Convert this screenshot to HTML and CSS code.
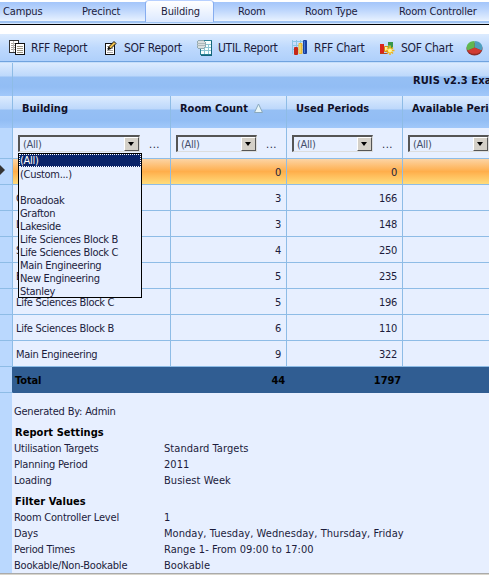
FILE: index.html
```
<!DOCTYPE html>
<html lang="en">
<head>
	<meta charset="UTF-8">
	<title>RUIS v2.3</title>
	<link rel="stylesheet" href="styles.css">
</head>
<body>
	<!-- tabs -->
	<div class="tabs">
		<div class="tab t_campus">Campus</div>
		<div class="tab t_precinct">Precinct</div>
		<div class="tab t_building active">Building</div>
		<div class="tab t_room">Room</div>
		<div class="tab t_type">Room Type</div>
		<div class="tab t_controller">Room Controller</div>
	</div>
	<!-- toolbar -->
	<div class="toolbar">
		<div class="tool rff">
			<svg width="18" height="17" viewBox="0 0 18 17" shape-rendering="crispEdges">
				<path d="M1.500 1.500h9v12h-9z" fill="#fff" stroke="#333"/>
				<path d="M3 4h6M3 6h6M3 8h6M3 10h6" stroke="#aaa49a"/>
				<path d="M5.500 2v11" stroke="#bbb"/>
				<path d="M7.500 4.500h9v11h-9z" fill="#fff" stroke="#111"/>
				<path d="M9 7.500h6M9 9.500h6M9 11.500h6M9 13.500h6" stroke="#9a9480"/>
			</svg>
			<span>RFF Report</span>
		</div>
		<div class="tool sof">
			<svg width="14" height="16" viewBox="0 0 14 16">
				<path d="M1.500 3.500h9v11h-9z" fill="#fff" stroke="#111" shape-rendering="crispEdges"/>
				<path d="M3 6.500h6M3 8.500h6M3 10.500h6M3 12.500h6" stroke="#aaa"/>
				<path d="M4 9.500l1-3 5-5 2 2-5 5z" fill="#f2c14a" stroke="#111"/>
				<path d="M4 9.500l1-3 1.500 2z" fill="#111"/>
			</svg>
			<span>SOF Report</span>
		</div>
		<div class="tool util">
			<svg width="17" height="17" viewBox="0 0 17 17" shape-rendering="crispEdges">
				<path d="M4.500 1.500h11v14h-11z" fill="#f6ffff" stroke="#267f93"/>
				<path d="M5 5.500h10M5 8.500h10M5 11.500h10M8.500 5v10M12.500 5v10" stroke="#8cc5d3"/>
				<path d="M15.500 2v14h-11" fill="none" stroke="#146579"/>
				<path d="M1 3c0-2 8-2 8 0v5c0 2-8 2-8 0z" fill="#d8dedf" stroke="#91a9b0"/>
				<path d="M1 4h8M1 6h8" stroke="#adb9bb"/>
			</svg>
			<span>UTIL Report</span>
		</div>
		<div class="tool rff_chart">
			<svg width="17" height="17" viewBox="0 0 17 17">
				<path d="M1 2.500h11M1 6.500h11M1 10.500h11M1.500 1v14M5.500 1v14M9.500 1v14" stroke="#8bc5e5"/>
				<rect x="3" y="8" width="4" height="8" rx="1" fill="#c52718"/>
				<rect x="7.500" y="4" width="4" height="11" rx="1" fill="#e9b936"/>
				<path d="M9 5v9" stroke="#fff08d"/>
				<rect x="12" y="1" width="4" height="14" rx="1" fill="#173f9f"/>
				<path d="M13.500 2v12" stroke="#4276d6"/>
			</svg>
			<span>RFF Chart</span>
		</div>
		<div class="tool sof_chart">
			<svg width="17" height="16" viewBox="0 0 17 16">
				<path d="M1 4h4v10H1z" fill="#d9251c"/>
				<path d="M5.500 6.500h4v5h-4z" fill="#fff2a8" stroke="#d28b17"/>
				<path d="M9 2h5v7H9z" fill="#38964a"/>
				<path d="M9 5h3v4H9z" fill="#70b956"/>
				<path d="M1 13.500h8" stroke="#b9431c"/>
				<path d="M11 6v9M6.500 10.500h9M8 7.500l6 6M14 7.500l-6 6" stroke="#efb51c" stroke-width="1.500"/>
				<circle cx="11" cy="10.500" r="2" fill="#fff69b"/>
			</svg>
			<span>SOF Chart</span>
		</div>
		<div class="tool pie">
			<svg width="17" height="16" viewBox="0 0 17 16">
				<ellipse cx="8.500" cy="9" rx="8" ry="6.500" fill="#8b2b27"/>
				<path d="M8.500 7.500V1a8 6.500 0 0 1 7 9.500z" fill="#4f9fbe"/>
				<path d="M8.500 7.500l7 3a8 6.500 0 0 1-14 0z" fill="#d13a31"/>
				<path d="M8.500 7.500V1a8 6.500 0 0 0-7 9.500z" fill="#60b74f"/>
			</svg>
		</div>
	</div>
	<!-- grid -->
	<div class="grid">
		<div class="row title"><div class="ind"></div><div class="caption">RUIS v2.3 Example</div></div>
		<div class="row head">
			<div class="ind"></div>
			<div><span>Building</span></div>
			<div><span>Room Count</span><svg class="sort" width="9" height="10" viewBox="0 0 9 10"><path d="M4.500 1L8.500 9.500h-8z" fill="#e8f6f8" stroke="#8aa9bd"/></svg></div>
			<div><span>Used Periods</span></div>
			<div><span>Available Periods</span></div>
		</div>
		<div class="row filter">
			<div class="ind"></div>
			<div>
				<div class="select wide"><span>(All)</span><i class="arrow"></i></div><b class="dots">...</b>
				<div class="list">
					<div class="sel"><span>(All)</span></div>
					<div><span>(Custom...)</span></div>
					<div></div>
					<div><span>Broadoak</span></div>
					<div><span>Grafton</span></div>
					<div><span>Lakeside</span></div>
					<div><span>Life Sciences Block B</span></div>
					<div><span>Life Sciences Block C</span></div>
					<div><span>Main Engineering</span></div>
					<div><span>New Engineering</span></div>
					<div><span>Stanley</span></div>
				</div>
			</div>
			<div><div class="select"><span>(All)</span><i class="arrow"></i></div><b class="dots">...</b></div>
			<div><div class="select"><span>(All)</span><i class="arrow"></i></div><b class="dots">...</b></div>
			<div><div class="select"><span>(All)</span><i class="arrow"></i></div></div>
		</div>
		<div class="row data current"><div class="ind"><svg width="5" height="12" viewBox="0 0 5 12"><path d="M0 1l5 5-5 5z" fill="#333"/></svg></div><div></div><div>0</div><div>0</div><div></div></div>
		<div class="row data"><div class="ind"></div><div>Grafton</div><div>3</div><div>166</div><div></div></div>
		<div class="row data"><div class="ind"></div><div>Lakeside</div><div>3</div><div>148</div><div></div></div>
		<div class="row data"><div class="ind"></div><div>Stanley</div><div>4</div><div>250</div><div></div></div>
		<div class="row data"><div class="ind"></div><div>Broadoak</div><div>5</div><div>235</div><div></div></div>
		<div class="row data"><div class="ind"></div><div>Life Sciences Block C</div><div>5</div><div>196</div><div></div></div>
		<div class="row data"><div class="ind"></div><div>Life Sciences Block B</div><div>6</div><div>110</div><div></div></div>
		<div class="row data"><div class="ind"></div><div>Main Engineering</div><div>9</div><div>322</div><div></div></div>
		<div class="row total"><div class="ind"></div><div>Total</div><div>44</div><div>1797</div><div></div></div>
	</div>
	<!-- report info -->
	<div class="info">
		<p class="by">Generated By: Admin</p>
		<h4>Report Settings</h4>
		<dl>
			<dt>Utilisation Targets</dt><dd>Standard Targets</dd>
			<dt>Planning Period</dt><dd>2011</dd>
			<dt>Loading</dt><dd>Busiest Week</dd>
		</dl>
		<h4>Filter Values</h4>
		<dl>
			<dt>Room Controller Level</dt><dd>1</dd>
			<dt>Days</dt><dd>Monday, Tuesday, Wednesday, Thursday, Friday</dd>
			<dt>Period Times</dt><dd>Range 1- From 09:00 to 17:00</dd>
			<dt>Bookable/Non-Bookable</dt><dd>Bookable</dd>
		</dl>
	</div>
	<div class="bottom"></div>
</body>
</html>
```
FILE: styles.css
```
*{
	box-sizing:border-box;
}
body{
	margin:0;
	width:489px;
	height:575px;
	overflow:hidden;
	background:#fff;
	color:#1c1c3c;
	font:11px/13px "DejaVu Sans Condensed","DejaVu Sans",sans-serif;
	font-stretch:condensed;
	letter-spacing:-0.3px;
	white-space:nowrap;
}

/* tabs */
.tabs{
	display:flex;
	height:25px;
	padding-top:2px;
	border-bottom:1px solid #000;
	background:linear-gradient(#fff 2px,#a3c5fa 2px,#b8d3fc 9px,#e4efff 20px,#f4f9ff 21px,#9fc3f2 21px,#9fc3f2 23px,#d5e6fc 23px);
	letter-spacing:-0.15px;
}
.tab{
	flex:none;
	padding-top:3px;
}
.t_campus{
	width:82px;
	padding-left:3px;
}
.t_precinct{
	width:63px;
}
.t_building{
	width:69px;
	padding-left:15px;
}
.t_room{
	width:91px;
	padding-left:24px;
}
.t_type{
	width:94px;
}
.active{
	height:22px;
	margin-top:-2px;
	padding-top:4px;
	border:1px solid #86adf0;
	border-top-color:#b7d0ff;
	border-bottom:0;
	border-radius:4px 4px 0 0;
	background:linear-gradient(#fff,#dce9ff);
}

/* toolbar */
.toolbar{
	display:flex;
	height:28px;
	margin-top:9px;
	padding-left:8px;
	border-bottom:1px solid #70a3df;
	background:linear-gradient(#dcebfe,#bed9fd 50%,#afd0fb);
	font-size:12px;
}
.tool{
	display:flex;
	align-items:center;
	gap:5px;
	flex:none;
}
.tool span{
	padding-top:2px;
}
.rff{
	width:96px;
}
.sof{
	gap:6px;
	width:92px;
}
.util{
	width:95px;
}
.rff_chart{
	gap:6px;
	width:88px;
}
.sof_chart{
	width:87px;
}

/* grid */
.row{
	display:grid;
	grid-template-columns:13px 158px 116px 116px 86px;
}
.row>div{
	border-right:1px solid #8ebce6;
}
.row>div:last-child{
	border-right:0;
}
.row .ind{
	background:#bad8fe;
}
.title{
	grid-template-columns:13px 476px;
	height:34px;
	border-top:1px solid #c5defa;
}
.title>div,.title>.ind,.head>div,.head>.ind{
	background:linear-gradient(#dcebfe,#bdd8fb 13px,#95bff4 14px,#92bdf4 24px,#a1c8fa);
}
.caption{
	padding:11px 0 0 400px;
	font-weight:bold;
	letter-spacing:0.1px;
	color:#101028;
	overflow:hidden;
}
.head{
	height:32px;
	font-weight:bold;
	letter-spacing:0;
	color:#101028;
}
.head>div{
	padding:6px 0 0 9px;
	overflow:hidden;
}
.sort{
	margin-left:6px;
	vertical-align:-1px;
}
.filter{
	height:31px;
	border-bottom:1px solid #8ebce6;
	background:#e7efff;
}
.filter>div{
	display:flex;
	position:relative;
	padding:7px 0 0 5px;
}
.select{
	display:flex;
	justify-content:space-between;
	width:81px;
	height:17px;
	border:1px solid #888;
	border-width:2px 1px 1px 2px;
	border-color:#555 #ddd #ddd #555;
	padding-left:3px;
	line-height:15px;
	color:#46506b;
}
.wide{
	width:122px;
}
.arrow{
	width:15px;
	height:14px;
	border:1px solid;
	border-color:#fff #555 #555 #fff;
	background:#d4d0c8;
}
.arrow::before{
	content:"";
	display:block;
	margin:4px 0 0 3px;
	width:0;
	border:solid transparent;
	border-width:4px 3.5px 0;
	border-top-color:#000;
}
.dots{
	margin:3px 0 0 9px;
	font-weight:normal;
	letter-spacing:0.5px;
}
.list{
	position:absolute;
	z-index:2;
	left:5px;
	top:25px;
	width:124px;
	height:145px;
	border:1px solid #000;
	background:#e7efff;
	color:#1c1c3c;
}
.list div{
	height:13px;
	padding-left:1px;
	line-height:15px;
}
.list .sel{
	outline:1px dotted #fff;
	outline-offset:-1px;
	background:#0a246a;
	line-height:14px;
	color:#fff;
}
.data{
	height:26px;
	border-bottom:1px solid #8ebce6;
	background:#e7efff;
}
.data>div{
	padding:7px 5px 0 3px;
	text-align:right;
}
.data>div:nth-child(2){
	text-align:left;
}
.data>.ind{
	padding:5px 0 0;
	text-align:left;
}
.current{
	background:linear-gradient(#fcd4a4,#ffae4b 50%,#ffdc7c);
}
.total{
	height:26px;
	background:#305d92;
	font-weight:bold;
	letter-spacing:-0.1px;
	color:#000;
}
.total>div{
	padding:7px 1px 0 3px;
	border-right-color:transparent;
	text-align:right;
}
.total>div:nth-child(2){
	padding-left:2px;
	text-align:left;
}
.total>.ind{
	border-right:1px solid #305d92;
	border-bottom:1px solid #8ebce6;
}

/* info */
.info{
	height:180px;
	padding:12px 0 0 2px;
	border-left:12px solid #bad8fe;
	background:#e7efff;
	letter-spacing:-0.2px;
}
.by{
	margin:0 0 8px;
}
h4{
	margin:0 0 0 1px;
	font-size:11px;
	line-height:13px;
	letter-spacing:0.05px;
	color:#000;
}
dl{
	display:grid;
	grid-template-columns:150px auto;
	grid-auto-rows:16px;
	margin:2px 0 6px;
	line-height:16px;
}
dd{
	margin:0;
	letter-spacing:0.05px;
}
.bottom{
	height:3px;
	background:#d8d5cc;
	border-top:1px solid #aaa;
}
```
